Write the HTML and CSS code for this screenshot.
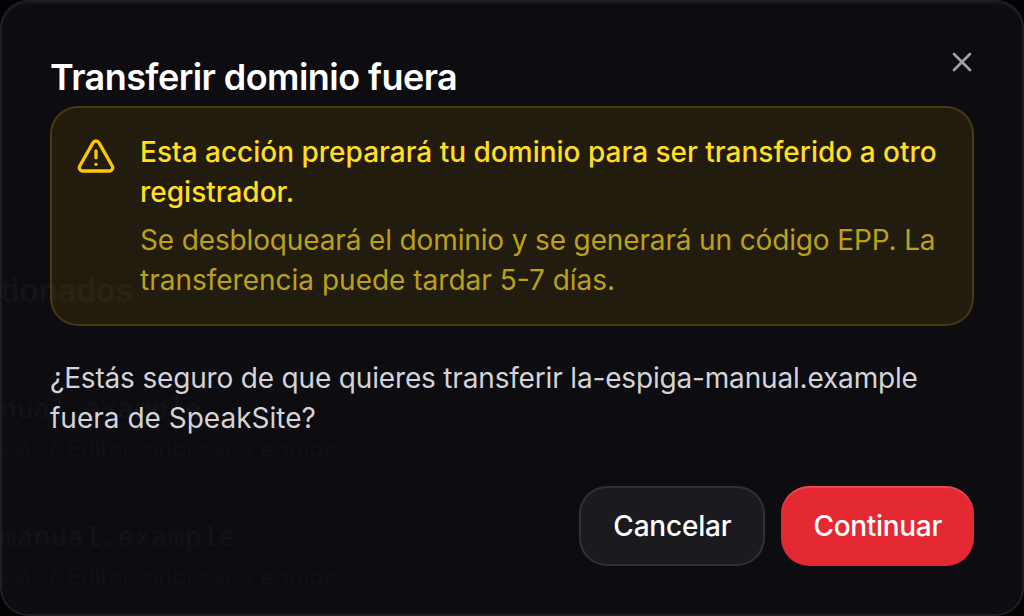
FILE: index.html
```html
<!DOCTYPE html>
<html lang="es">
<head>
    <meta charset="UTF-8">
    <meta name="viewport" content="width=device-width, initial-scale=1.0">
    <title>Transferir dominio fuera</title>
    <link rel="stylesheet" href="styles.css">
</head>
<body>
    <!-- page behind the dialog -->
    <div class="page" aria-hidden="true">
        <h1 class="page-title">tionados</h1>
        <div class="domain">
            <div class="domain-name">nual.example</div>
            <div class="domain-site">e A07 Editor, publicar y equipo</div>
        </div>
        <div class="domain">
            <div class="domain-name">manual.example</div>
            <div class="domain-site">e A07 Editor, publicar y equipo</div>
        </div>
    </div>

    <div class="dialog" role="dialog" aria-labelledby="title">
        <h2 class="title" id="title">Transferir dominio fuera</h2>
        <button class="close" aria-label="Cerrar">
            <svg viewBox="0 0 24 24"><path d="M18 6 6 18"/><path d="m6 6 12 12"/></svg>
        </button>
        <div class="warning">
            <svg class="warning-icon" viewBox="0 0 24 24">
                <path d="m21.73 18-8-14a2 2 0 0 0-3.48 0l-8 14A2 2 0 0 0 4 21h16a2 2 0 0 0 1.73-3"/>
                <path d="M12 9v4"/>
                <path d="M12 17h.01"/>
            </svg>
            <div class="warning-text">
                <p class="warning-title">Esta acción preparará tu dominio para ser transferido a otro registrador.</p>
                <p class="warning-detail">Se desbloqueará el dominio y se generará un código EPP. La transferencia puede tardar 5-7 días.</p>
            </div>
        </div>
        <p class="question">¿Estás seguro de que quieres transferir la-espiga-manual.example fuera de SpeakSite?</p>
        <div class="actions">
            <button class="btn cancel">Cancelar</button>
            <button class="btn continue">Continuar</button>
        </div>
    </div>
</body>
</html>
```
FILE: styles.css
```css
* {
    box-sizing: border-box;
    margin: 0;
    padding: 0;
}
body {
    position: relative;
    height: 100vh;
    overflow: hidden;
    background: #020204;
    font-family: Inter, "Liberation Sans", sans-serif;
    font-size: 28px;
    line-height: 40px;
}
.page {
    position: absolute;
    inset: 0;
    padding-top: 271px;
    color: #77777c;
    white-space: nowrap;
}
.page-title {
    margin-bottom: 80px;
    font-size: 32px;
    font-weight: 600;
    line-height: 40px;
    letter-spacing: -0.2px;
    color: #88888c;
}
.domain {
    height: 128px;
}
.domain-name {
    font-family: "Liberation Mono", monospace;
}
.domain-site {
    margin: -2px 0 0 -6px;
    font-size: 24px;
    letter-spacing: -0.1px;
    color: #505055;
}
.dialog {
    position: relative;
    height: 616px;
    padding: 48px;
    border: 2px solid rgba(255, 255, 255, 0.08);
    border-radius: 28px;
    background: rgba(13, 13, 18, 0.95);
    box-shadow: inset 0 2px 0 rgba(255, 255, 255, 0.04);
}
.title {
    margin: -1px 0 1px;
    font-size: 36px;
    font-weight: 600;
    line-height: 56px;
    letter-spacing: -0.56px;
    color: #fff;
}
.close {
    position: absolute;
    top: 44px;
    right: 44px;
    width: 32px;
    height: 32px;
    border: none;
    background: none;
    cursor: pointer;
}
svg {
    display: block;
    fill: none;
    stroke: #9f9fb0;
    stroke-width: 2;
    stroke-linecap: round;
    stroke-linejoin: round;
}
.warning {
    display: flex;
    gap: 24px;
    padding: 24px;
    border: 2px solid rgba(240, 177, 0, 0.2);
    border-radius: 28px;
    background: rgba(240, 177, 0, 0.1);
}
.warning-icon {
    flex: none;
    width: 40px;
    height: 40px;
    margin-top: 4px;
    stroke: #fdc700;
}
.warning-title {
    margin-bottom: 8px;
    font-weight: 500;
    color: #ffdf20;
}
.warning-detail {
    color: rgba(255, 223, 32, 0.7);
}
.warning-detail::first-line {
    letter-spacing: -0.14px;
}
.question {
    margin: 32px 0 48px;
    color: #d4d4d8;
}
.question::first-line {
    letter-spacing: -0.17px;
}
.actions {
    display: flex;
    justify-content: flex-end;
    gap: 16px;
}
.btn {
    height: 80px;
    padding: 0 32px;
    border: 2px solid rgba(255, 255, 255, 0.1);
    border-radius: 28px;
    background: #1a1a1f;
    color: #fff;
    font: 500 28px Inter, sans-serif;
    letter-spacing: -0.2px;
    cursor: pointer;
}
.continue {
    border: none;
    background: #e42933;
    box-shadow: inset 0 2px 0 rgba(255, 255, 255, 0.15);
    letter-spacing: -0.3px;
}
```
